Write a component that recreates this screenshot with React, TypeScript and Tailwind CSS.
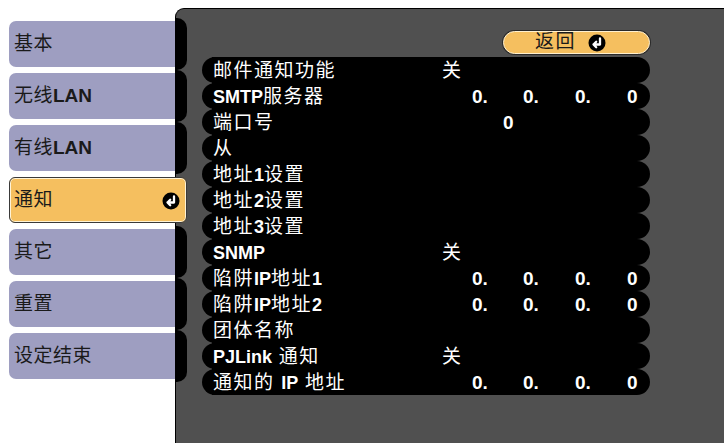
import type { ReactNode } from "react";

const FONT = {
  fontFamily: '"Liberation Sans", "Noto Sans CJK SC", sans-serif',
};

type Tab = { label: ReactNode; selected?: boolean };

const tabs: Tab[] = [
  { label: "基本" },
  { label: <>无线<b>LAN</b></> },
  { label: <>有线<b>LAN</b></> },
  { label: "通知", selected: true },
  { label: "其它" },
  { label: "重置" },
  { label: "设定结束" },
];

type Row = { label: ReactNode; value?: "off" | "ip" | "port" };

const rows: Row[] = [
  { label: "邮件通知功能", value: "off" },
  { label: <><b>SMTP</b>服务器</>, value: "ip" },
  { label: "端口号", value: "port" },
  { label: "从" },
  { label: <>地址<b>1</b>设置</> },
  { label: <>地址<b>2</b>设置</> },
  { label: <>地址<b>3</b>设置</> },
  { label: <b>SNMP</b>, value: "off" },
  { label: <>陷阱<b>IP</b>地址<b>1</b></>, value: "ip" },
  { label: <>陷阱<b>IP</b>地址<b>2</b></>, value: "ip" },
  { label: "团体名称" },
  { label: <><b>PJLink</b> 通知</>, value: "off" },
  { label: <>通知的 <b>IP</b> 地址</>, value: "ip" },
];

function EnterIcon() {
  return (
    <svg width="18" height="18" viewBox="0 0 18 18">
      <circle cx="9" cy="9" r="8.5" fill="#000" />
      <path
        d="M12 4.5 V10.5 H5.5 M8.2 7.8 L5.5 10.5 L8.2 13.2"
        fill="none"
        stroke="#fff"
        strokeWidth="2.3"
        strokeLinecap="round"
        strokeLinejoin="round"
      />
    </svg>
  );
}

function Value({ kind }: { kind?: Row["value"] }) {
  if (kind === "off") return <span className="font-normal">关</span>;
  if (kind === "port")
    return <span className="pl-[61px] font-bold text-[19px]">0</span>;
  if (kind === "ip")
    return (
      <span className="flex pl-[30px] font-bold text-[19px]">
        <span className="w-[51px]">0.</span>
        <span className="w-[52px]">0.</span>
        <span className="w-[52px]">0.</span>
        <span>0</span>
      </span>
    );
  return null;
}

export default function App() {
  return (
    <div
      className="flex h-[443px] w-[724px] overflow-hidden bg-white"
      style={FONT}
    >
      <div className="relative z-10 flex w-[187px] shrink-0 flex-col gap-[6px] pl-[9px] pt-[21px]">
        {tabs.map((tab, i) =>
          tab.selected ? (
            <div
              key={i}
              className="flex h-[46px] w-[178px] items-center justify-between rounded-[6px] border border-[#3a3a3a] bg-[#f5bf5f] pl-[4px] pr-[6px] pt-[1px] text-[19px] tracking-[0.5px] text-[#1a1a1a] shadow-[inset_0_0_0_1px_#fff3d6]"
            >
              <span>{tab.label}</span>
              <EnterIcon />
            </div>
          ) : (
            <div key={i} className="flex h-[46px]">
              <div className="flex w-[166px] items-center rounded-l-[7px] bg-[#9e9ec1] pl-[5px] pt-[1px] text-[19px] tracking-[0.5px] text-[#1a1a1a] [&_b]:tracking-normal">
                {tab.label}
              </div>
              <div className="-my-[3px] w-[12px] rounded-r-[10px] bg-black" />
            </div>
          )
        )}
      </div>

      <div className="-ml-[12px] mt-[8px] flex-1 rounded-tl-[9px] border-l border-t border-black bg-[#505050] pl-[26px] pt-[22px]">
        <div className="flex w-[448px] flex-col">
          <div className="ml-auto flex h-[23px] w-[147px] items-center rounded-full border border-[#fff0cf] bg-[#f5bf5f] pl-[31px] text-[19px] text-[#1a1a1a] shadow-[0_0_0_1px_#2a2a2a]">
            <span className="tracking-[1.5px]">返回</span>
            <span className="ml-[12px]">
              <EnterIcon />
            </span>
          </div>

          <div className="ml-[10px] mr-[15px] mt-[3px] bg-black">
            {rows.map((row, i) => (
              <div
                key={i}
                className="-ml-[10px] -mr-[15px] flex h-[26px] items-center rounded-full bg-black pl-[11px] text-[19px] leading-none text-white"
              >
                <span className="w-[229px] shrink-0 tracking-[1.5px] [&_b]:text-[18px] [&_b]:tracking-normal">
                  {row.label}
                </span>
                <Value kind={row.value} />
              </div>
            ))}
          </div>
        </div>
      </div>
    </div>
  );
}
